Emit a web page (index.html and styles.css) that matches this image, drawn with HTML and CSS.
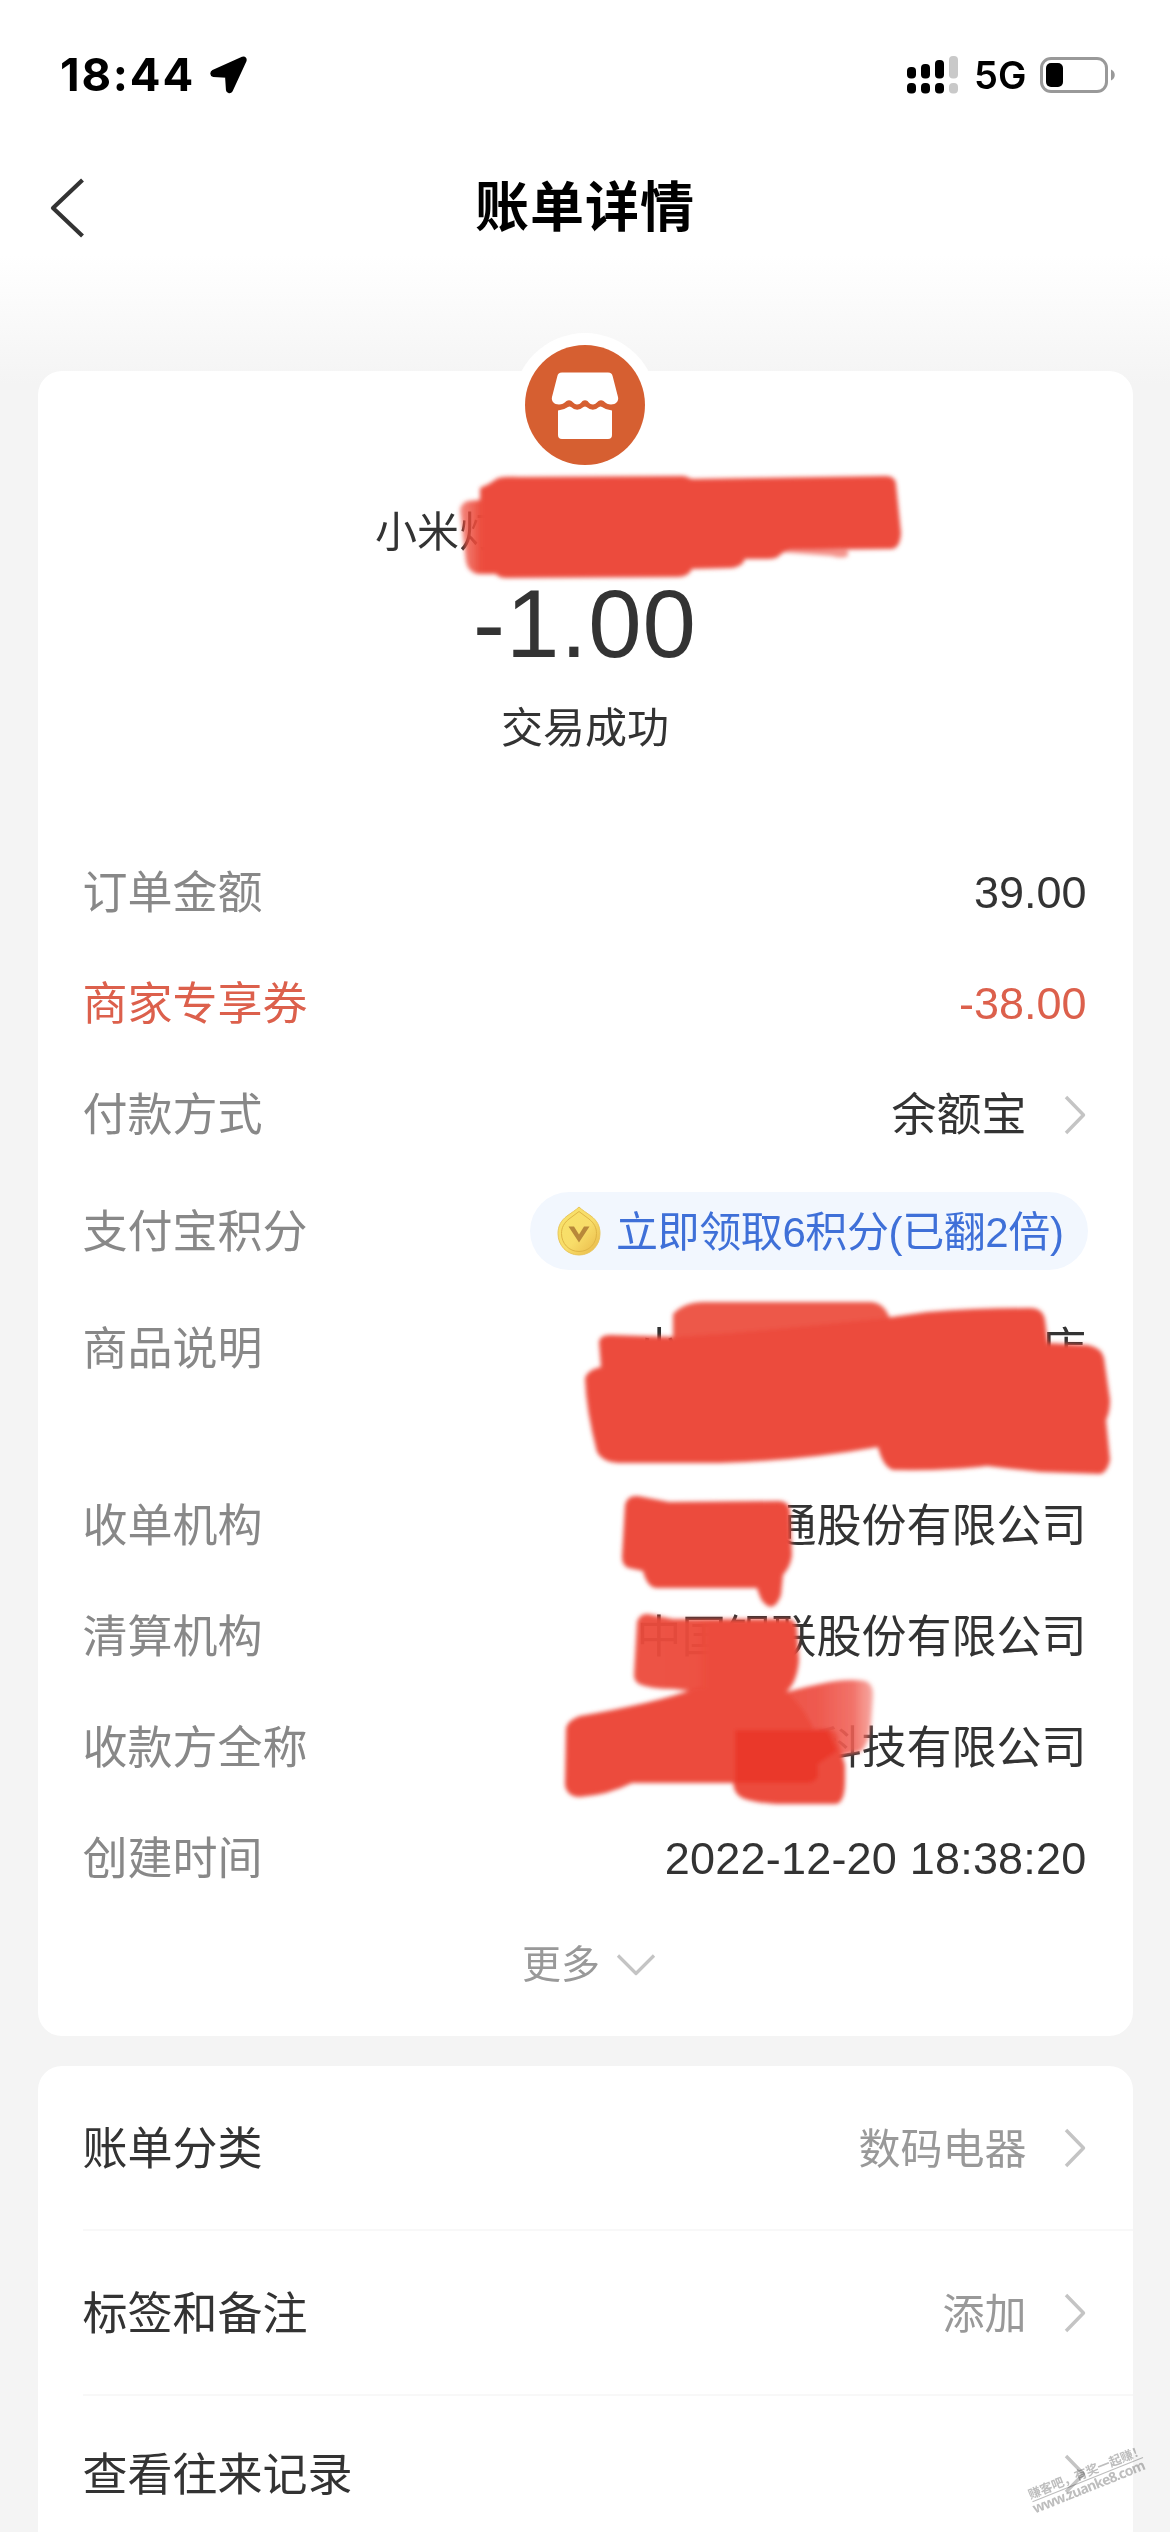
FILE: index.html
```html
<!DOCTYPE html>
<html lang="zh-CN">
<head>
<meta charset="utf-8">
<title>账单详情</title>
<link rel="stylesheet" href="styles.css">
</head>
<body>
<div class="screen">
  <header class="top">
    <div class="status">
      <div class="status-left">
        <span class="clock">18:44</span>
        <svg class="loc" width="38" height="38" viewBox="0 0 38 38"><path d="M33.500 2 4 15.200C2 16.200 2 19.300 4.400 19.800L17.300 20.400 18.200 34C18.600 36.500 21.300 36.800 22.600 34.600L36.200 5C37 2.600 35.500 1.200 33.500 2Z" stroke="#000" stroke-width="2.500" stroke-linejoin="round"/></svg>
      </div>
      <div class="status-right">
        <svg class="signal" width="52" height="38" viewBox="0 0 52 38">
          <rect x="0" y="11" width="9" height="11.500" rx="4"/><rect x="14" y="8" width="9" height="14.500" rx="4"/><rect x="28" y="4" width="9" height="18.500" rx="4"/><rect x="42" y="0" width="9" height="22.500" rx="4" fill="#c9c9c9"/>
          <rect x="0" y="27" width="9" height="10.500" rx="4"/><rect x="14" y="27" width="9" height="10.500" rx="4"/><rect x="28" y="27" width="9" height="10.500" rx="4"/><rect x="42" y="27" width="9" height="10.500" rx="4" fill="#c9c9c9"/>
        </svg>
        <span class="net">5G</span>
        <svg class="battery" width="76" height="36" viewBox="0 0 76 36">
          <rect x="1.500" y="1.500" width="65" height="33" rx="9.500" fill="none" stroke="#999" stroke-width="3"/>
          <rect x="6" y="6" width="17" height="24" rx="5"/>
          <path d="M71 12.500C76 14.500 76 21.500 71 23.500Z" fill="#999"/>
        </svg>
      </div>
    </div>
    <nav class="nav">
      <svg class="back" width="36" height="60" viewBox="0 0 36 60" fill="none"><path d="M33.500 2 4 30 33.500 58" stroke="#333" stroke-width="4.200" stroke-linejoin="round"/></svg>
      <h1 class="title">账单详情</h1>
    </nav>
  </header>

  <main class="content">
    <section class="card detail">
      <svg class="shop" width="144" height="144" viewBox="0 0 144 144">
        <circle cx="72" cy="72" r="72" fill="#fff"/>
        <circle cx="72" cy="72" r="60" fill="#d65f31"/>
        <path fill="#fff" d="M49 39.500H95C98 39.500 99 41 99.600 43L105 64C106 68 103 71.500 98 71.500Q94 71.500 90.500 68Q88 66.500 85.500 68Q82 71.500 80 71.500Q77 71.500 74.500 68Q72 66.500 69.500 68Q67 71.500 64 71.500Q62 71.500 58.500 68Q56 66.500 53.500 68Q50 71.500 46 71.500C41 71.500 38 68 39 64L44.400 43C45 41 46 39.500 49 39.500Z"/>
        <path fill="#fff" d="M45 77.500Q51 77 55 74Q56.500 73 58 74Q64 79.500 70.500 74Q72 73 73.500 74Q80 79.500 86 74Q87.500 73 89 74Q93 77 99 77.500V102Q99 106 95 106H49Q45 106 45 102Z"/>
      </svg>
      <div class="merchant">小米灯</div>
      <div class="amount">-1.00</div>
      <div class="state">交易成功</div>

      <div class="rows">
        <div class="row"><span class="label">订单金额</span><span class="value">39.00</span></div>
        <div class="row coupon"><span class="label">商家专享券</span><span class="value">-38.00</span></div>
        <div class="row"><span class="label">付款方式</span><span class="value link"><span class="han">余额宝</span><svg class="chev" width="24" height="42" viewBox="0 0 24 42" fill="none"><path d="M3 3 20.500 21 3 39" stroke="#c4c4c4" stroke-width="3.400" stroke-linejoin="round"/></svg></span></div>
        <div class="row points-row"><span class="label">支付宝积分</span>
          <span class="pill">
            <svg class="coin" width="44" height="50" viewBox="0 0 44 50">
              <defs><linearGradient id="gold" x1="0" y1="0" x2="1" y2="1"><stop offset="0" stop-color="#f8e36a"/><stop offset=".55" stop-color="#f8dd69"/><stop offset="1" stop-color="#e8b545"/></linearGradient></defs>
              <path d="M22 1C25 4 30 7 34 10C40 14.500 43 20 43 27.500C43 39.500 34 49 22 49S1 39.500 1 27.500C1 20 4 14.500 10 10C14 7 19 4 22 1Z" fill="url(#gold)" stroke="#e9c65c" stroke-width="1"/>
              <path d="M22 5.500C25 8 29 10.500 32 13C37 17 39.500 21.500 39.500 27.500C39.500 37.500 32 45.500 22 45.500S4.500 37.500 4.500 27.500C4.500 21.500 7 17 12 13C15 10.500 19 8 22 5.500Z" fill="none" stroke="#dfb545" stroke-width="1"/>
              <path d="M11.500 20.500H17L22 28.500 27 20.500H32.500L22 36.500Z" fill="#b8883a"/>
            </svg>
            <span class="pill-text">立即领取6积分(已翻2倍)</span>
          </span>
        </div>
        <div class="row goods"><span class="label">商品说明</span><span class="value goods-name"><span>小米</span><span>店</span></span></div>
        <div class="row"><span class="label">收单机构</span><span class="value han">通股份有限公司</span></div>
        <div class="row"><span class="label">清算机构</span><span class="value han">中国银联股份有限公司</span></div>
        <div class="row"><span class="label">收款方全称</span><span class="value han">科技有限公司</span></div>
        <div class="row"><span class="label">创建时间</span><span class="value date">2022-12-20 18:38:20</span></div>
      </div>
      <div class="more">更多<svg width="40" height="24" viewBox="0 0 40 24" fill="none"><path d="M2 2.500 20 20.500 38 2.500" stroke="#c4c4c4" stroke-width="3.200" stroke-linejoin="round"/></svg></div>
    </section>

    <section class="card menu">
      <div class="item"><span class="name">账单分类</span><span class="hint"><span class="name">数码电器</span><svg class="chev" width="24" height="42" viewBox="0 0 24 42" fill="none"><path d="M3 3 20.500 21 3 39" stroke="#c4c4c4" stroke-width="3.400" stroke-linejoin="round"/></svg></span></div>
      <div class="item"><span class="name">标签和备注</span><span class="hint"><span class="name">添加</span><svg class="chev" width="24" height="42" viewBox="0 0 24 42" fill="none"><path d="M3 3 20.500 21 3 39" stroke="#c4c4c4" stroke-width="3.400" stroke-linejoin="round"/></svg></span></div>
      <div class="item"><span class="name">查看往来记录</span><span class="hint"><svg class="chev" width="24" height="42" viewBox="0 0 24 42" fill="none"><path d="M3 3 20.500 21 3 39" stroke="#c4c4c4" stroke-width="3.400" stroke-linejoin="round"/></svg></span></div>
    </section>
  </main>

  <!-- marker strokes that cover private details -->
  <svg class="marker" width="1170" height="2532" viewBox="0 0 1170 2532">
    <defs>
      <filter id="soft" x="-5%" y="-5%" width="110%" height="110%"><feGaussianBlur stdDeviation="2"/></filter>
      <linearGradient id="fade" x1="0" x2="1" y1="0" y2="0"><stop offset="0" stop-color="#ec4b3c"/><stop offset=".6" stop-color="#ee5449" stop-opacity=".96"/><stop offset=".85" stop-color="#f06055" stop-opacity=".88"/><stop offset="1" stop-color="#f27268" stop-opacity=".6"/></linearGradient>
      <linearGradient id="edge" x1="0" x2="1" y1="0" y2="0"><stop offset="0" stop-color="#ec4b3c" stop-opacity=".65"/><stop offset=".05" stop-color="#ec4b3c"/></linearGradient>
      <linearGradient id="clearing" x1="0" x2="1" y1="0" y2="0"><stop offset="0" stop-color="#ec4b3c" stop-opacity=".95"/><stop offset=".38" stop-color="#ec4b3c" stop-opacity=".96"/><stop offset=".45" stop-color="#ec4b3c"/><stop offset="1" stop-color="#ec4b3c"/></linearGradient>
    </defs>
    <g filter="url(#soft)" fill="#ec4b3c">
      <path fill="#f4938a" d="M780 548 848 550V556Q842 559 832 556L780 552Z"/>
      <path fill="url(#edge)" d="M480 500V488Q490 484 498 478Q506 476 520 477L684 476 692 479 886 476Q895 476 896 484L901 533Q900 549 891 549L790 550Q782 552 779 556Q776 559 768 559H745Q742 567 732 568L692 569Q688 577 678 577L506 578Q499 578 496 574H478Q468 572 466 562L460 510Q461 503 468 501Z"/>
      <path fill="#ed584a" d="M673 1340V1314Q684 1302 704 1302H872Q885 1304 890 1319V1345H675Z"/>
      <path d="M599 1342Q600 1335 610 1335L675 1337 730 1333Q800 1327 885 1318L927 1312Q975 1308 1030 1308Q1043 1308 1045 1320L1048 1343 1088 1345Q1102 1348 1104 1358L1110 1400Q1110 1412 1106 1420L1110 1460Q1107 1473 1100 1474L1040 1472Q1010 1469 987 1466Q950 1471 893 1470Q883 1467 878 1447Q800 1461 720 1463H618Q602 1462 597 1452Q586 1410 585 1378Q587 1370 601 1367Z"/>
      <path d="M622 1557 625 1505Q627 1495 638 1496L669 1502 780 1501Q789 1502 790 1510L792 1555Q791 1566 783 1575L781 1595Q777 1607 770 1607Q762 1604 759 1594L757 1588H656Q647 1587 643 1571L629 1568Q622 1566 622 1557Z"/>
      <path fill="url(#clearing)" d="M634 1675 637 1622Q640 1613 648 1614L673 1619H789Q797 1621 797 1630L799 1660Q797 1683 786 1692H699L673 1689Q650 1689 639 1684Q634 1681 634 1675Z"/>
      <path fill="url(#fade)" d="M750 1703Q790 1690 820 1684Q845 1678 865 1681Q874 1684 873 1697L871 1725Q869 1745 860 1752L835 1757H740Z"/>
      <path d="M697 1688 786 1691Q808 1712 816 1735V1783H632Q608 1795 580 1797Q567 1797 565 1785L566 1728Q568 1720 580 1716Q615 1710 645 1703Q675 1696 697 1688Z"/>
      <path d="M733 1729H830Q838 1732 838 1741L845 1765V1780Q845 1804 835 1804H776Q745 1802 738 1795Q733 1790 733 1780Z"/>
      <path fill="#ea3829" d="M735 1730H828L837 1751 818 1764V1776Q816 1783 807 1783H735Z"/>
    </g>
  </svg>
  <svg class="marker stamp" width="1170" height="2532" viewBox="0 0 1170 2532">
    <g transform="translate(1032.500 2501.700) rotate(-21.800)">
      <text class="stamp-cn" x="-1" y="-3" textLength="124">赚客吧，有奖一起赚！</text>
      <path d="M0 0H119" stroke="#bdbdbd" stroke-width="1"/>
      <text class="stamp-url" x="-2" y="12" textLength="120">www.zuanke8.com</text>
    </g>
  </svg>
</div>
</body>
</html>
```
FILE: styles.css
```css
* { box-sizing: border-box; }

body {
  margin: 0;
  background: #f4f4f4;
  color: #333;
  font-family: "Liberation Sans", "Noto Sans CJK SC", sans-serif;
}

.screen {
  position: relative;
  width: 1170px;
  height: 2532px;
  overflow: hidden;
  background: linear-gradient(#fff 0, #fff 255px, #f4f4f4 385px);
}

.top { height: 371px; }

.status {
  display: flex;
  justify-content: space-between;
  padding: 56px 54px 0 60px;
  height: 151px;
  color: #000;
}
.status-left, .status-right { display: flex; height: 38px; align-items: center; }
.clock {
  font: 700 45.500px/38px Inter, sans-serif;
  letter-spacing: 1.800px;
  width: 149px;
}
.net {
  font: 600 38px/38px Inter, sans-serif;
  width: 66px;
  margin-left: 15px;
}

.nav {
  display: flex;
  align-items: center;
  height: 114px;
  padding: 0 50px 0 49px;
}
.title {
  flex: 1;
  margin: 0 35px 0 0;
  text-align: center;
  font-size: 54px;
  font-weight: 700;
  letter-spacing: 1px;
  line-height: 80px;
  color: #000;
}

.content {
  display: flex;
  flex-direction: column;
  gap: 30px;
  padding: 0 37.500px;
}
.card {
  background: #fff;
  border-radius: 24px;
}

.detail {
  display: flex;
  flex-direction: column;
  align-items: center;
  height: 1665px;
}
.shop { margin-top: -38px; flex: none; }
.merchant {
  width: 420px;
  margin-top: 25px;
  font-size: 42px;
  line-height: 62px;
}
.amount {
  margin-top: 6px;
  font-size: 96px;
  line-height: 108px;
  letter-spacing: 1px;
}
.state {
  margin-top: 20px;
  font-size: 42px;
  line-height: 62px;
}

.rows {
  width: 100%;
  margin-top: 77px;
  padding: 0 46px 0 45px;
  font-size: 45px;
}
.row {
  display: flex;
  align-items: center;
  justify-content: space-between;
  height: 111px;
  line-height: 66px;
}
.label { color: #888; }
.label, .han { padding-top: 3px; }
.coupon .label, .coupon .value { color: #dc604c; }
.link { display: flex; align-items: center; }
.chev { margin-left: 36px; }
.points-row { height: 122px; }
.goods { height: 178px; align-items: flex-start; padding-top: 22px; }
.goods-name {
  display: flex;
  justify-content: space-between;
  width: 450px;
  padding-top: 3px;
}
.date { letter-spacing: .2px; }

.pill {
  display: flex;
  align-items: center;
  height: 78px;
  margin-right: -1px;
  padding: 0 24px 0 27px;
  border-radius: 39px;
  background: #f2f7fe;
  color: #3f70d8;
}
.pill-text {
  margin-left: 15px;
  padding-top: 3px;
  font-size: 42px;
  letter-spacing: -.4px;
}

.more {
  display: flex;
  align-items: center;
  gap: 16px;
  margin-top: 22px;
  margin-left: 8px;
  font-size: 39px;
  line-height: 58px;
  color: #999;
}

.menu { padding-left: 45px; height: 500px; }
.item {
  display: flex;
  align-items: center;
  justify-content: space-between;
  height: 165px;
  padding-right: 46px;
  border-bottom: 2px solid #f8f8f8;
  font-size: 45px;
}
.item:last-child { height: 156px; border: 0; }
.name { padding-bottom: 5px; }
.hint {
  display: flex;
  align-items: center;
  font-size: 42px;
  color: #999;
}

.marker { position: absolute; left: 0; top: 0; }
.stamp { fill: #bdbdbd; mix-blend-mode: multiply; }
.stamp-cn { font: 700 12.500px "Noto Sans CJK SC", sans-serif; }
.stamp-url { font: 700 14px "Noto Sans", sans-serif; }
```
